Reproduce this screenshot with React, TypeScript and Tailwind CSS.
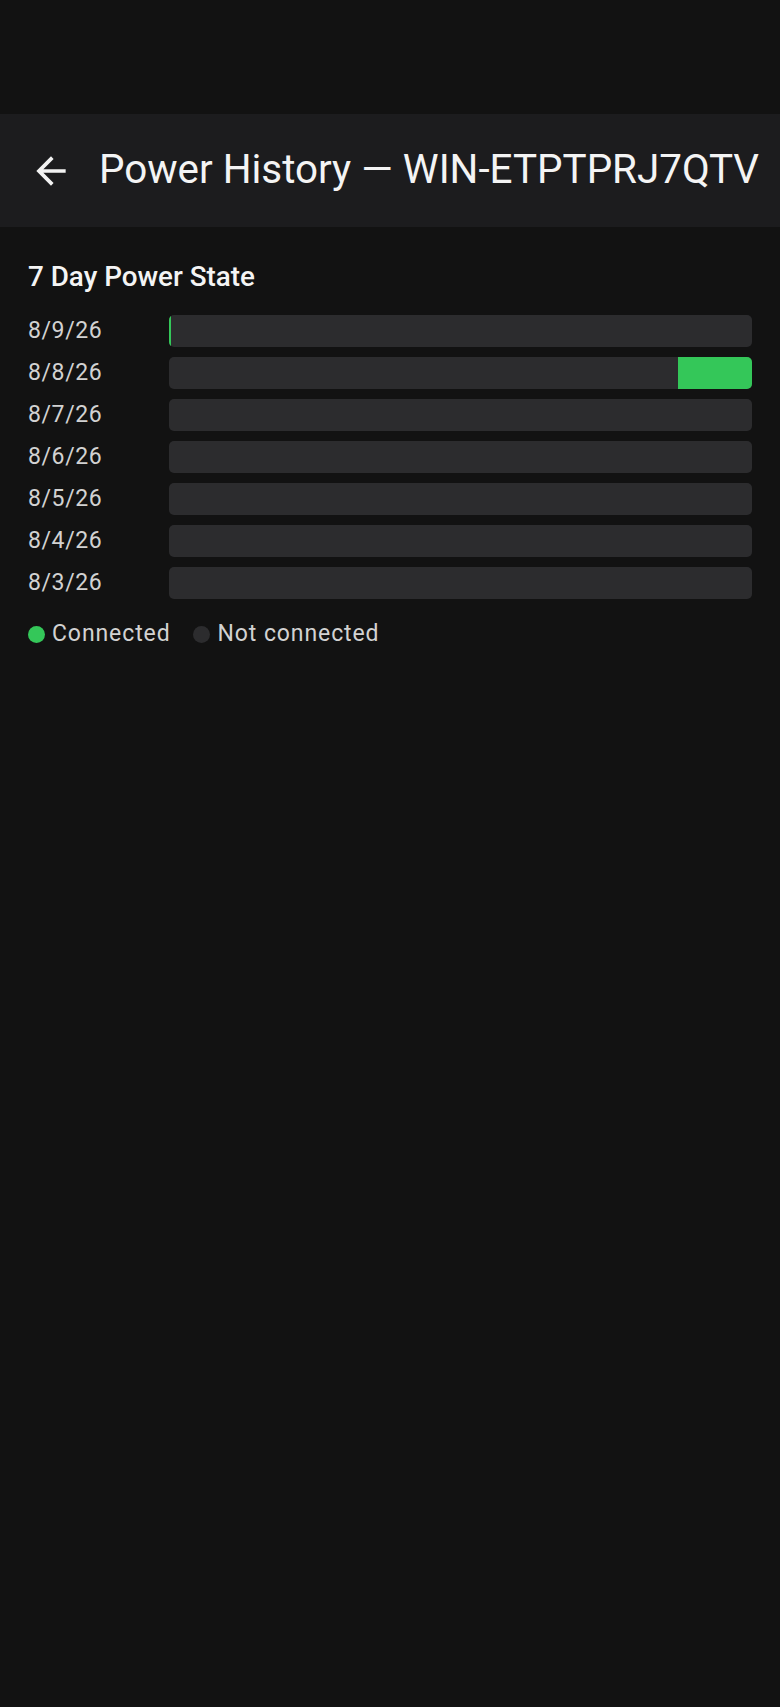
const days = [
  { date: '8/9/26', start: 0, width: 0.4 },
  { date: '8/8/26', start: 87.3, width: 12.7 },
  { date: '8/7/26', start: 0, width: 0 },
  { date: '8/6/26', start: 0, width: 0 },
  { date: '8/5/26', start: 0, width: 0 },
  { date: '8/4/26', start: 0, width: 0 },
  { date: '8/3/26', start: 0, width: 0 },
];

export default function App() {
  return (
    <div
      className="min-h-[1707px] bg-[#121212] text-white"
      style={{ fontFamily: 'Roboto, "Noto Sans", sans-serif' }}
    >
      {/* status bar space */}
      <div className="h-[114px]" />

      {/* Header */}
      <div className="h-[113px] bg-[#1c1c1e] flex items-center pl-[29px]">
        <svg viewBox="0 0 24 24" className="w-[44px] h-[44px] fill-[#f2f2f2]">
          <path d="M20 11H7.83l5.59-5.59L12 4l-8 8 8 8 1.41-1.41L7.83 13H20v-2z" />
        </svg>
        <h1 className="ml-[26px] text-[40.4px] text-[#f4f4f4] whitespace-nowrap">
          Power History — WIN-ETPTPRJ7QTV
        </h1>
      </div>

      {/* Content */}
      <div className="px-[28px] pt-[34px]">
        <h2 className="text-[27.8px] leading-[32px] font-medium text-[#f4f4f4]">7 Day Power State</h2>

        <div className="mt-[22px] flex flex-col gap-[10px]">
          {days.map((d) => (
            <div key={d.date} className="flex items-center h-[32px]">
              <div className="w-[141px] text-[23px] text-[#d2d2d2] tracking-[0.6px]">{d.date}</div>
              <div className="relative flex-1 h-[32px] rounded-[5px] bg-[#2c2c2e] overflow-hidden">
                {d.width > 0 && (
                  <div
                    className="absolute top-0 bottom-0 bg-[#34c759]"
                    style={{ left: `${d.start}%`, width: d.width < 1 ? '2px' : `${d.width}%` }}
                  />
                )}
              </div>
            </div>
          ))}
        </div>

        {/* Legend */}
        <div className="mt-[18px] flex items-center text-[23px] text-[#d2d2d2] tracking-[0.9px]">
          <span className="w-[17px] h-[17px] rounded-full bg-[#34c759]" />
          <span className="ml-[7px]">Connected</span>
          <span className="ml-[22px] w-[17px] h-[17px] rounded-full bg-[#2c2c2e]" />
          <span className="ml-[8px]">Not connected</span>
        </div>
      </div>
    </div>
  );
}
